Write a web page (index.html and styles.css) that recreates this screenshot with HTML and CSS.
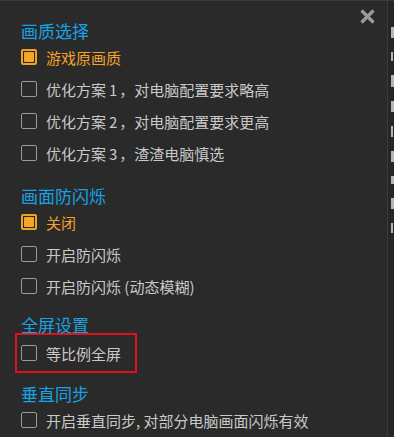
FILE: index.html
```html
<!DOCTYPE html>
<html lang="zh-CN">
<head>
<meta charset="utf-8">
<link rel="stylesheet" href="styles.css">
</head>
<body>
<div class="frame">
  <div class="panel">
    <button class="close" aria-label="关闭">
      <svg width="15" height="15" viewBox="0 0 15 15"><path d="M1.5 1.5 L13.5 13.5 M13.5 1.5 L1.5 13.5" stroke="#9c9c9c" stroke-width="3.2" stroke-linecap="butt"/></svg>
    </button>

    <div class="heading first">画质选择</div>
    <div class="row checked"><span class="box"></span><span class="label">游戏原画质</span></div>
    <div class="row"><span class="box"></span><span class="label">优化方案<span class="num">1</span>，对电脑配置要求略高</span></div>
    <div class="row"><span class="box"></span><span class="label">优化方案<span class="num">2</span>，对电脑配置要求更高</span></div>
    <div class="row"><span class="box"></span><span class="label">优化方案<span class="num">3</span>，渣渣电脑慎选</span></div>

    <div class="heading">画面防闪烁</div>
    <div class="row checked"><span class="box"></span><span class="label">关闭</span></div>
    <div class="row"><span class="box"></span><span class="label">开启防闪烁</span></div>
    <div class="row"><span class="box"></span><span class="label">开启防闪烁 (动态模糊)</span></div>

    <div class="heading third">全屏设置</div>
    <div class="highlight">
      <div class="row inner"><span class="box"></span><span class="label">等比例全屏</span></div>
    </div>

    <div class="heading fourth">垂直同步</div>
    <div class="row"><span class="box"></span><span class="label">开启垂直同步, 对部分电脑画面闪烁有效</span></div>
  </div>
  <div class="edge">
    <i class="frag f1"></i>
    <i class="frag f2"></i>
    <i class="frag f3"></i>
    <i class="frag f4"></i>
    <i class="frag f5"></i>
    <i class="frag f6"></i>
    <i class="frag f7"></i>
    <i class="frag f8"></i>
    <i class="frag f9"></i>
  </div>
</div>
</body>
</html>
```

FILE: styles.css
```css
* { box-sizing: border-box; }
html, body {
  margin: 0;
  padding: 0;
  background: #2a2a2a;
  width: 394px;
  height: 437px;
  overflow: hidden;
}
body {
  font-family: "Noto Sans CJK SC", "Noto Sans", sans-serif;
}
.frame {
  display: flex;
  width: 394px;
  height: 437px;
  border-top: 1px solid #3a3a3a;
}
.panel {
  position: relative;
  flex: 1;
  padding-left: 21px;
  padding-top: 20px;
  background: #2a2a2a;
}
.close {
  position: absolute;
  top: 8px;
  right: 12px;
  width: 15px;
  height: 15px;
  padding: 0;
  border: 0;
  background: none;
}
.close svg { display: block; }
.heading {
  height: 20px;
  line-height: 20px;
  font-size: 17px;
  color: #17a2e6;
  margin-top: 17px;
}
.heading.first { margin-top: 0; }
.heading.third { margin-top: 13px; }
.heading.fourth { margin-top: 11px; }
.row {
  height: 32px;
  display: flex;
  align-items: center;
  gap: 9px;
  font-size: 15px;
  color: #c9c9c9;
  white-space: nowrap;
}
.num {
  margin-left: 3px;
  margin-right: 2px;
}
.box {
  width: 16px;
  height: 16px;
  border: 1px solid #9a9a9a;
  border-radius: 2px;
  flex: none;
  position: relative;
}
.row.checked { color: #f3a12a; }
.row.checked .box {
  border: 2px solid #f0a025;
}
.row.checked .box::after {
  content: "";
  position: absolute;
  left: 1px;
  top: 1px;
  width: 10px;
  height: 10px;
  background: #f7a52a;
  border-radius: 1px;
}
.highlight {
  width: 122px;
  height: 40px;
  margin-left: -6px;
  margin-top: -2px;
  border: 2px solid #e0111a;
  padding-left: 4px;
}
.row.inner {
  height: 36px;
}
.edge {
  width: 7px;
  flex: none;
  border-left: 1px solid #3b3b3b;
  background: #262626;
  overflow: hidden;
  display: flex;
  flex-direction: column;
  align-items: flex-start;
  padding-top: 26px;
  padding-left: 3px;
  gap: 14px;
}
.frag {
  display: block;
  width: 3px;
  height: 11px;
  background: #cfcfcf;
  opacity: 0.85;
}
.frag.f2 { height: 9px; width: 2px; }
.frag.f3 { height: 12px; }
.frag.f5 { width: 2px; }
.frag.f7 { height: 8px; }
.frag.f9 { height: 10px; width: 2px; }
```
